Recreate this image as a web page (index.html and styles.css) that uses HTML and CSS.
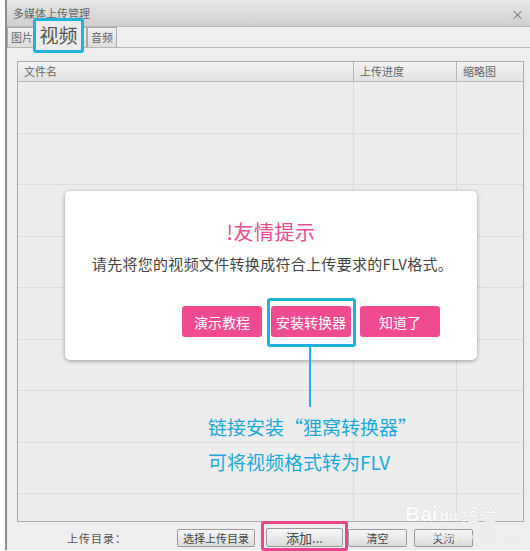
FILE: index.html
```html
<!DOCTYPE html>
<html lang="zh-CN">
<head>
    <meta charset="UTF-8">
    <title>多媒体上传管理</title>
    <link rel="stylesheet" href="styles.css">
</head>
<body>
    <div class="window">
        <div class="titlebar">
            <span class="title">多媒体上传管理</span>
            <span class="close">×</span>
        </div>
        <div class="tabs">
            <div class="tab">图片</div>
            <div class="tab tab-active"></div>
            <div class="tab">音频</div>
        </div>
        <div class="content">
            <div class="grid">
                <div class="grid-head">
                    <div class="col col-name">文件名</div>
                    <div class="col col-progress">上传进度</div>
                    <div class="col col-thumb">缩略图</div>
                </div>
                <div class="grid-body">
                    <div class="row"><div class="col col-name"></div><div class="col col-progress"></div><div class="col col-thumb"></div></div>
                    <div class="row"><div class="col col-name"></div><div class="col col-progress"></div><div class="col col-thumb"></div></div>
                    <div class="row"><div class="col col-name"></div><div class="col col-progress"></div><div class="col col-thumb"></div></div>
                    <div class="row"><div class="col col-name"></div><div class="col col-progress"></div><div class="col col-thumb"></div></div>
                    <div class="row"><div class="col col-name"></div><div class="col col-progress"></div><div class="col col-thumb"></div></div>
                    <div class="row"><div class="col col-name"></div><div class="col col-progress"></div><div class="col col-thumb"></div></div>
                    <div class="row"><div class="col col-name"></div><div class="col col-progress"></div><div class="col col-thumb"></div></div>
                    <div class="row"><div class="col col-name"></div><div class="col col-progress"></div><div class="col col-thumb"></div></div>
                    <div class="row"><div class="col col-name"></div><div class="col col-progress"></div><div class="col col-thumb"></div></div>
                </div>
            </div>
        </div>
        <div class="footer">
            <span class="footer-label">上传目录：</span>
            <button class="btn btn-dir">选择上传目录</button>
            <button class="btn btn-add">添加...</button>
            <button class="btn btn-clear">清空</button>
            <button class="btn btn-close">关闭</button>
        </div>
    </div>

    <!-- highlighted tab, drawn over the tab strip -->
    <div class="mark mark-tab">视频</div>

    <!-- the tip dialog -->
    <div class="dialog">
        <div class="dialog-title">!友情提示</div>
        <div class="dialog-text">请先将您的视频文件转换成符合上传要求的FLV格式。</div>
        <div class="dialog-buttons">
            <button class="pink-btn">演示教程</button>
            <button class="pink-btn">安装转换器</button>
            <button class="pink-btn">知道了</button>
        </div>
    </div>

    <div class="mark mark-install"></div>
    <div class="mark-line"></div>
    <div class="note">
        <div>链接安装“狸窝转换器”</div>
        <div>可将视频格式转为FLV</div>
    </div>
    <div class="mark mark-add"></div>

    <div class="watermark">
        <div class="wm-logo">Bai<span class="wm-du">du</span><span class="wm-jy">经验</span></div>
        <div class="wm-url">jingyan.baidu.com</div>
    </div>
</body>
</html>
```

FILE: styles.css
```css
body {
    margin: 0;
    background-color: white;
    font-family: "Noto Sans CJK SC", "Liberation Sans", sans-serif;
    width: 530px;
    height: 551px;
    overflow: hidden;
    position: relative;
}
.window {
    margin-left: 5px;
    width: 525px;
    height: 550px;
    border-left: 2px solid #8c8c8c;
    background-color: #eeeeee;
    box-sizing: border-box;
    display: flex;
    flex-direction: column;
}
.titlebar {
    height: 27px;
    box-sizing: border-box;
    background: linear-gradient(#e8e8e8, #cfcfcf);
    border-bottom: 1px solid #b8b8b8;
    display: flex;
    align-items: center;
    justify-content: space-between;
    padding: 0 6px;
}
.title {
    font-size: 11px;
    color: #666;
}
.close {
    font-size: 13px;
    color: #777;
}
.tabs {
    height: 21px;
    box-sizing: border-box;
    display: flex;
    align-items: flex-end;
    border-bottom: 1px solid #b5b5b5;
    background-color: #efefef;
}
.tab {
    height: 20px;
    box-sizing: border-box;
    padding: 0 3px;
    font-size: 11px;
    line-height: 19px;
    color: #666;
    background: linear-gradient(#f0f0f0, #dedede);
    border: 1px solid #aaaaaa;
    border-bottom: none;
}
.tab-active {
    width: 50px;
}
.content {
    padding: 13px 6px 0 10px;
}
.grid {
    height: 461px;
    box-sizing: border-box;
    border: 1px solid #acacac;
    background-color: #ededed;
    overflow: hidden;
}
.grid-head {
    height: 19px;
    display: flex;
    background: linear-gradient(#f3f3f3, #e2e2e2);
    border-bottom: 1px solid #b8b8b8;
}
.grid-head .col {
    font-size: 11px;
    line-height: 19px;
    color: #666;
    padding-left: 6px;
    box-sizing: border-box;
    border-right: 1px solid #b5b5b5;
}
.col-name {
    width: 336px;
}
.col-progress {
    width: 103px;
}
.col-thumb {
    flex: 1;
}
.grid-head .col-thumb {
    border-right: none;
}
.row {
    height: 51.5px;
    display: flex;
    box-sizing: border-box;
    border-bottom: 1px solid #dddddd;
}
.row .col {
    box-sizing: border-box;
    border-right: 1px solid #dcdcdc;
}
.row .col-thumb {
    border-right: none;
}
.footer {
    flex: 1;
    display: flex;
    align-items: center;
    padding-top: 3px;
}
.footer-label {
    font-size: 11px;
    color: #555;
    margin-left: 60px;
    width: 110px;
    letter-spacing: 1px;
}
.btn {
    height: 18px;
    padding: 0;
    border: 1px solid #9a9a9a;
    border-radius: 2px;
    background: linear-gradient(#f8f8f8, #dadada);
    font-family: inherit;
    font-size: 11px;
    color: #444;
    line-height: 16px;
}
.btn-dir {
    width: 78px;
}
.btn-add {
    width: 77px;
    height: 19px;
    margin-left: 11px;
    font-size: 13px;
}
.btn-clear {
    width: 59px;
    margin-left: 5px;
}
.btn-close {
    width: 59px;
    margin-left: 7px;
}
.mark {
    position: absolute;
    border: 3px solid #1fb2de;
    border-radius: 3px;
    box-sizing: border-box;
}
.mark-tab {
    left: 33px;
    top: 18px;
    width: 51px;
    height: 35px;
    background-color: #ececec;
    font-size: 19px;
    line-height: 28px;
    text-align: center;
    color: #555;
}
.dialog {
    position: absolute;
    left: 65px;
    top: 191px;
    width: 412px;
    height: 169px;
    box-sizing: border-box;
    background-color: white;
    border-radius: 5px;
    box-shadow: 0 1px 4px rgba(0, 0, 0, 0.35);
    padding-top: 28px;
}
.dialog-title {
    text-align: center;
    font-size: 20px;
    line-height: 26px;
    color: #ea4d90;
    letter-spacing: 0.5px;
}
.dialog-text {
    margin-top: 9px;
    text-align: center;
    font-size: 15px;
    line-height: 20px;
    color: #444;
    letter-spacing: 0.3px;
    padding-left: 3px;
}
.dialog-buttons {
    margin-top: 32px;
    display: flex;
    justify-content: flex-end;
    gap: 9px;
    padding-right: 37px;
}
.pink-btn {
    width: 80px;
    height: 31px;
    border: none;
    border-radius: 3px;
    background-color: #f04b91;
    color: white;
    font-family: inherit;
    font-size: 14px;
    padding: 0;
}
.mark-install {
    left: 267px;
    top: 298px;
    width: 89px;
    height: 49px;
}
.mark-line {
    position: absolute;
    left: 309px;
    top: 347px;
    width: 2px;
    height: 60px;
    background-color: #1fb2de;
}
.note {
    position: absolute;
    left: 208px;
    top: 409px;
    font-size: 19px;
    line-height: 35px;
    color: #1da9d8;
}
.mark-add {
    left: 261px;
    top: 521px;
    width: 87px;
    height: 30px;
    border-color: #e9448c;
}
.watermark {
    position: absolute;
    left: 405px;
    top: 502px;
    color: white;
    text-shadow: 0 0 1px #c4c4c4;
    opacity: 0.85;
}
.wm-logo {
    font-family: "Liberation Sans", sans-serif;
    font-size: 21px;
    font-weight: bold;
    line-height: 24px;
}
.wm-du {
    font-size: 15px;
    margin-left: 2px;
}
.wm-jy {
    font-family: "Noto Sans CJK SC", sans-serif;
    font-weight: normal;
    font-size: 17px;
    margin-left: 4px;
}
.wm-url {
    font-family: "Liberation Sans", sans-serif;
    font-size: 11px;
    line-height: 12px;
    margin-left: 24px;
    margin-top: 2px;
}
```
